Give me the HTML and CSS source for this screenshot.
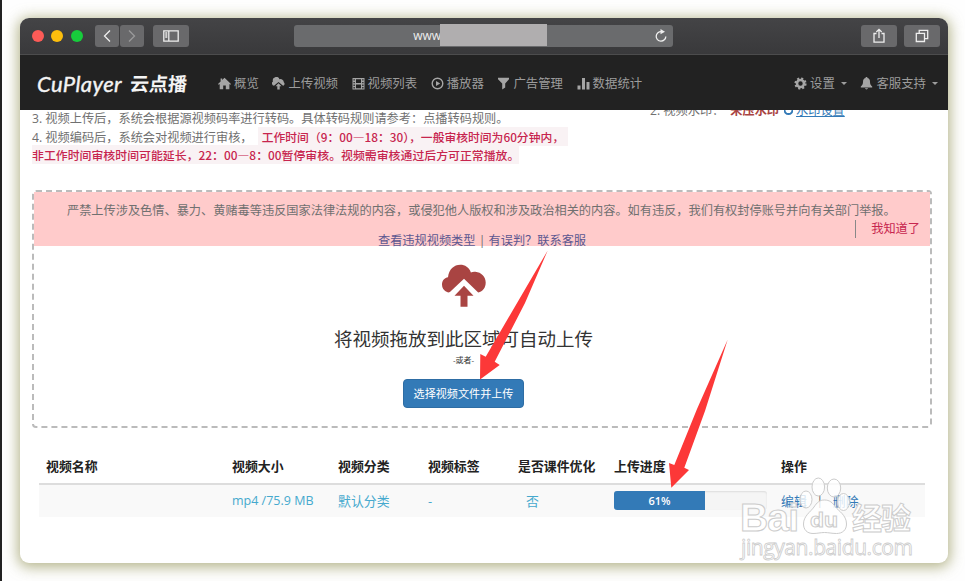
FILE: index.html
```
<!DOCTYPE html>
<html lang="zh-CN">
<head>
  <meta charset="UTF-8">
  <title>CuPlayer 云点播</title>
  <link rel="stylesheet" href="styles.css">
</head>
<body>

  <div class="window">
    <div class="titlebar">
      <span class="dot red"></span>
      <span class="dot yellow"></span>
      <span class="dot green"></span>
      <div class="tool back">
        <svg width="12" height="14" viewBox="0 0 12 14"><path d="M9 1.5 3.5 7 9 12.5"/></svg>
      </div>
      <div class="tool forward">
        <svg width="12" height="14" viewBox="0 0 12 14"><path d="M3 1.5 8.5 7 3 12.5"/></svg>
      </div>
      <div class="tool sidebar">
        <svg width="16" height="12" viewBox="0 0 16 12"><path d="M.8.8h14.4v10.4H.8zM5.8.8v10.4M2.3 3h2M2.3 5h2M2.3 7h2"/></svg>
      </div>
      <div class="address">
        <span class="www">www</span>
        <span class="mask"></span>
        <svg class="reload" width="14" height="14" viewBox="0 0 14 14"><path d="M7.5 2.6A4.8 4.8 0 1 0 11.8 7.4"/><path class="solid" d="M6.5 0 11 2.7 6.5 5.3z"/></svg>
      </div>
      <div class="tool share">
        <svg width="14" height="16" viewBox="0 0 14 16"><path d="M4.5 5.5H2v8.7h10V5.5H9.5M7 10V1.5M4.3 4 7 1.3 9.7 4"/></svg>
      </div>
      <div class="tool tabs">
        <svg width="14" height="14" viewBox="0 0 14 14"><path d="M1.3 4.3h8.2v8.2H1.3zM4.2 4.3V1.3h8.5v8.4H9.5"/></svg>
      </div>
    </div>

    <div class="navbar">
      <div class="logo"><span class="logo-en">CuPlayer</span><span class="logo-cn">云点播</span></div>
      <div class="menu">
        <div class="menu-item">
          <svg width="13" height="13" viewBox="0 0 13 13"><path d="M6.5.8 13 7l-.7.8-.9-.7V12.3H7.8V8.5H5.2v3.8H1.7V7.1l-1 .7L0 7l2.600-2.500V1.500h1.600V3z"/></svg>
          <span>概览</span>
        </div>
        <div class="menu-item">
          <svg width="13" height="13" viewBox="0 0 13 13"><path d="M2 8.700A2.300 2.300 0 0 1 1 4.500 3.400 3.400 0 0 1 7.500 2.300a3.200 3.200 0 0 1 4.300 2.900 2 2 0 0 1-.7 3.500L6.500 4.900z"/><path d="M6.500 6.300 9.500 9.300H7.700V12.500H5.300V9.300H3.500z"/></svg>
          <span>上传视频</span>
        </div>
        <div class="menu-item">
          <svg width="13" height="13" viewBox="0 0 13 13"><path fill-rule="evenodd" d="M.5 1h12v11.500H.5zM1.500 2.200v1.300h1.300V2.200zM1.500 5v1.300h1.300V5zM1.500 7.600v1.300h1.300V7.600zM1.500 10.100v1.300h1.300v-1.300zM10.200 2.200v1.300h1.300V2.200zM10.200 5v1.300h1.300V5zM10.200 7.600v1.300h1.300V7.600zM10.200 10.100v1.300h1.300v-1.300zM4 2.200v3.800h5V2.200zM4 7.400v3.900h5V7.400z"/></svg>
          <span>视频列表</span>
        </div>
        <div class="menu-item">
          <svg width="13" height="13" viewBox="0 0 13 13"><circle class="line" cx="6.5" cy="6.5" r="5.3"/><path d="M5 3.9v5.2l4.2-2.6z"/></svg>
          <span>播放器</span>
        </div>
        <div class="menu-item">
          <svg width="13" height="13" viewBox="0 0 13 13"><path d="M1 .8h11v1.4L8.2 6.500v4L5.200 12.500v-6L1 2.200z"/></svg>
          <span>广告管理</span>
        </div>
        <div class="menu-item">
          <svg width="13" height="13" viewBox="0 0 13 13"><path d="M.5 8.5h3V12.5h-3zM5 1h3v11.5H5zM9.5 5h3v7.5h-3z"/></svg>
          <span>数据统计</span>
        </div>
      </div>
      <div class="menu menu-right">
        <div class="menu-item">
          <svg width="13" height="13" viewBox="0 0 13 13"><circle class="gear-teeth" cx="6.5" cy="6.5" r="4.9"/><circle class="gear" cx="6.5" cy="6.5" r="3.5"/></svg>
          <span>设置</span>
          <i class="caret"></i>
        </div>
        <div class="menu-item">
          <svg width="13" height="13" viewBox="0 0 13 13"><path d="M6.5 0c.8 0 1 .5 1 1.1C9.5 1.7 10 3.2 10 5c0 2 .6 3.2 2.2 4.5v1H.8v-1C2.4 8.2 3 7 3 5c0-1.800.5-3.300 2.500-3.900C5.500.5 5.700 0 6.500 0zM5 11.300h3c-.3 1.500-2.700 1.500-3 0z"/></svg>
          <span>客服支持</span>
          <i class="caret"></i>
        </div>
      </div>
    </div>

    <div class="content">
      <div class="notes">
        <div class="notes-left">
          <p>3. 视频上传后，系统会根据源视频码率进行转码。具体转码规则请参考：点播转码规则。</p>
          <p>4. 视频编码后，系统会对视频进行审核， <code class="code-first">工作时间（9：00—18：30），一般审核时间为60分钟内，</code></p>
          <p><code class="code-second">非工作时间审核时间可能延长，22：00—8：00暂停审核。视频需审核通过后方可正常播放。</code></p>
        </div>
        <div class="notes-right">
          <span>2. 视频水印：</span>
          <b>未压水印</b>
          <a><svg width="9" height="12" viewBox="0 0 9 12"><path d="M2 2a4 4 0 1 0 5 0"/></svg><u>水印设置</u></a>
        </div>
      </div>

      <div class="dropzone">
        <div class="warning">
          <p class="warning-text">严禁上传涉及色情、暴力、黄赌毒等违反国家法律法规的内容，或侵犯他人版权和涉及政治相关的内容。如有违反，我们有权封停账号并向有关部门举报。</p>
          <div class="known"><span>我知道了</span></div>
          <p class="warning-links"><a>查看违规视频类型</a> | <a>有误判？联系客服</a></p>
        </div>
        <div class="drop-body">
          <svg class="cloud" width="46" height="44" viewBox="0 0 46 44">
            <path d="M6.5 28.3A8 8 0 0 1 1 20.8C1 16.3 3.8 13.7 7 13.2 7.8 5.5 13 .8 19.3.8c4.7 0 8.700 2.600 10.600 7.600 1.500-.6 3-.8 4.500-.6 6 .6 10.300 5 10.300 10.700 0 5.200-2.800 9-7.500 9.900L23 14.800 9.200 27.800c-.8.6-1.800.7-2.700.5z"/>
            <path d="M23 21.8 32.5 31.8H26.5v11h-7v-11h-6z"/>
          </svg>
          <h3>将视频拖放到此区域可自动上传</h3>
          <small>-或者-</small>
          <button class="btn">选择视频文件并上传</button>
        </div>
      </div>

      <div class="table">
        <div class="row head">
          <span>视频名称</span>
          <span>视频大小</span>
          <span>视频分类</span>
          <span>视频标签</span>
          <span>是否课件优化</span>
          <span>上传进度</span>
          <span>操作</span>
        </div>
        <div class="row item">
          <span></span>
          <span class="size">mp4 /75.9 MB</span>
          <span>默认分类</span>
          <span>-</span>
          <span class="optimized">否</span>
          <div class="progress"><div class="progress-bar" style="width: 59.5%">61%</div></div>
          <span class="actions"><a>编辑</a><i>|</i><a>删除</a></span>
        </div>
      </div>
    </div>
  </div>

  <!-- 箭头和水印 -->
  <svg class="overlay" width="965" height="581" viewBox="0 0 965 581">
    <path class="arrow" d="M547.7 250.5 485.7 356.7 480.3 354 480 379.5 499.7 365 494.7 361.7 525 303z"/>
    <path class="arrow" d="M727.7 339.5 697 409 674.3 465 669 463 671.3 487.7 689 470 684.3 467.7 705 411z"/>
    <g class="mark">
      <text x="740" y="531" class="mark-bai" textLength="59">Bai</text>
      <ellipse cx="806" cy="499.5" rx="6" ry="8.5"/>
      <ellipse cx="818.3" cy="487" rx="6.3" ry="9"/>
      <ellipse cx="834" cy="488" rx="6.7" ry="9"/>
      <ellipse cx="843.5" cy="502" rx="6" ry="8.5"/>
      <path d="M824.5 500c5 0 8 2.5 11 7 3 4 11 8 11 17 0 6-4 9.5-10 9.5-5 0-8-1-12-1s-7 1-11.5 1c-6 0-9.5-4-9.5-9.5 0-8 7-12 10.5-17 3-4.5 5.5-7 10.5-7z"/>
      <text x="810" y="527" class="mark-du" textLength="28" lengthAdjust="spacingAndGlyphs">du</text>
      <text x="852" y="529" class="mark-cn" textLength="59">经验</text>
      <text x="741" y="555" class="mark-url" textLength="172">jingyan.baidu.com</text>
    </g>
  </svg>

</body>
</html>
```
FILE: styles.css
```
* {
  box-sizing: border-box;
}

body {
  margin: 0;
  height: 581px;
  padding: 18px 17px 18px 18px;
  border-left: 2px solid #222;
  background: #fefefe;
  font-family: "Open Sans", "Noto Sans CJK SC", sans-serif;
  font-size: 12.2px;
  color: #707070;
  overflow: hidden;
}

p, h3 {
  margin: 0;
  font-weight: normal;
}

.window {
  height: 545px;
  border-radius: 9px;
  background: #fff;
  box-shadow: 0 2px 14px 2px rgba(140, 140, 75, 0.65);
  overflow: hidden;
}

/* 浏览器标题栏 */
.titlebar {
  display: flex;
  align-items: center;
  height: 37px;
  padding: 0 8px 0 12px;
  background: linear-gradient(#444446, #39393b);
  border-bottom: 1px solid #4c4c4d;
}

.dot {
  width: 12px;
  height: 12px;
  margin-right: 7.4px;
  border-radius: 50%;
}

.red {
  background: #fc5b57;
}

.yellow {
  background: #fdbe0d;
}

.green {
  background: #17cc3c;
}

.tool {
  display: flex;
  align-items: center;
  justify-content: center;
  width: 36px;
  height: 22px;
  border-radius: 3px;
  background: #69696b;
}

.tool svg, .reload {
  fill: none;
  stroke: #eee;
  stroke-width: 1.3;
}

.back {
  width: 24px;
  margin-left: 5px;
}

.forward {
  width: 24px;
  margin-left: 1px;
}

.forward svg {
  stroke: #9a9a9b;
}

.sidebar {
  margin-left: 9px;
}

.address {
  display: flex;
  align-items: center;
  width: 379px;
  height: 22px;
  margin-left: 105px;
  padding-left: 119px;
  border-radius: 3px;
  background: #6a6b6d;
  color: #eee;
}

.www {
  width: 27px;
  font-size: 12px;
  line-height: 20px;
  overflow: hidden;
}

.mask {
  width: 107px;
  height: 22px;
  margin-top: -2px;
  background: #b0aeaf;
}

.reload {
  margin-left: 107px;
}

.reload .solid {
  fill: #eee;
  stroke: none;
}

.share {
  margin-left: auto;
}

.tabs {
  margin-left: 7px;
}

/* 导航 */
.navbar {
  display: flex;
  align-items: center;
  height: 55px;
  padding: 2px 10px 0 17px;
  background: #222;
  color: #9d9d9d;
}

.logo {
  display: flex;
  align-items: center;
  width: 181px;
  color: #f4f4f4;
}

.logo-en {
  width: 93px;
  font: italic 22px Lato, sans-serif;
  letter-spacing: 0.4px;
  -webkit-text-stroke: 0.4px #f4f4f4;
}

.logo-cn {
  font-size: 19px;
  font-weight: bold;
  line-height: 24px;
  transform: skewX(-5deg);
}

.menu {
  display: flex;
  gap: 13.6px;
}

.menu-right {
  margin-left: auto;
}

.menu-item {
  display: flex;
  align-items: center;
  gap: 3px;
  font-size: 12.4px;
  line-height: 18px;
}

.menu-item svg {
  fill: #a5a5a5;
}

.menu-item .line {
  fill: none;
  stroke: #a5a5a5;
  stroke-width: 1.4;
}

.menu-item .gear {
  fill: none;
  stroke: #a5a5a5;
  stroke-width: 2.6;
}

.menu-item .gear-teeth {
  fill: none;
  stroke: #a5a5a5;
  stroke-width: 2.4;
  stroke-dasharray: 2 1.85;
}

.caret {
  margin-left: 3px;
  border: 3.5px solid transparent;
  border-top-color: #9d9d9d;
  border-bottom: 0;
}

/* 内容 */
.content {
  height: 453px;
  padding: 0 16px 0 12px;
  overflow: hidden;
}

.notes {
  display: flex;
  height: 80px;
}

.notes-left {
  width: 618px;
  line-height: 17.6px;
  white-space: nowrap;
}

.notes-right {
  display: flex;
  height: 18px;
  margin-top: -8px;
  line-height: 18px;
}

.notes-right b {
  margin-left: 6px;
  color: #a94442;
}

.notes-right a {
  display: flex;
  margin-left: 5px;
  color: #337ab7;
}

.notes-right a svg {
  margin: 3px 3px 0 0;
  fill: none;
  stroke: #337ab7;
  stroke-width: 2;
}

code {
  padding: 1px 0;
  background: #f9f2f4;
  color: #c7254e;
  font-family: "Noto Sans CJK SC", sans-serif;
  font-weight: 500;
}

.code-first {
  margin-left: 2px;
  padding: 1px 4px;
  font-size: 11.8px;
}

.code-second {
  font-size: 11.9px;
}

.dropzone {
  width: 900px;
  height: 238px;
  border: 2px dashed #bbb;
  border-radius: 4px;
}

.warning {
  height: 54px;
  padding-top: 10px;
  background: #ffcbcb;
}

.warning-text {
  padding-left: 33px;
  line-height: 18px;
  white-space: nowrap;
}

.known {
  display: flex;
  justify-content: flex-end;
  padding-right: 10px;
  line-height: 18px;
  color: #c7254e;
}

.known span {
  padding-left: 15px;
  border-left: 1px solid #888;
}

.warning-links {
  margin-top: -6px;
  line-height: 18px;
  text-align: center;
}

.warning-links a {
  color: #5c5790;
}

.drop-body {
  display: flex;
  flex-direction: column;
  align-items: center;
  padding: 18px 37px 0 0;
}

.cloud {
  fill: #a94442;
}

h3 {
  margin-top: 17px;
  font-size: 18.5px;
  line-height: 28px;
  color: #333;
}

small {
  font-size: 8px;
  line-height: 14px;
  color: #333;
}

.btn {
  width: 121px;
  height: 29px;
  margin-top: 12px;
  padding: 0 0 2px;
  border: 1px solid #2e6da4;
  border-radius: 4px;
  background: #337ab7;
  color: #fff;
  font-family: inherit;
  font-size: 11.1px;
}

/* 上传列表 */
.table {
  width: 886px;
  margin: 21px 0 0 7px;
}

.row {
  display: grid;
  grid-template-columns: 186px 106px 90px 90px 96px 167px 1fr;
  align-items: center;
  padding-left: 7px;
  font-size: 12.9px;
}

.head {
  height: 36px;
  padding-bottom: 2px;
  border-bottom: 2px solid #ddd;
  color: #222;
  font-weight: 600;
}

.item {
  height: 32px;
  padding-bottom: 1px;
  background: #f9f9f9;
  color: #46a9ce;
}

.size {
  font-size: 12.5px;
}

.optimized {
  padding-left: 8px;
}

.progress {
  width: 153px;
  height: 19px;
  border-radius: 3px;
  background: #f5f5f5;
  box-shadow: inset 0 1px 2px rgba(0, 0, 0, 0.1);
  overflow: hidden;
}

.progress-bar {
  height: 19px;
  background: #337ab7;
  color: #fff;
  font-size: 11px;
  font-weight: 600;
  line-height: 19px;
  text-align: center;
}

.actions {
  display: flex;
  color: #337ab7;
}

.actions i {
  width: 26px;
  font-style: normal;
  text-align: center;
  color: #666;
}

/* 浮在页面上方 */
.overlay {
  position: absolute;
  left: 0;
  top: 0;
}

.arrow {
  fill: #fc3838;
}

.mark {
  fill: rgba(255, 255, 255, 0.8);
  stroke: #ccc;
  stroke-width: 1;
}

.mark-bai {
  font: bold 39px "Liberation Sans", sans-serif;
}

.mark-du {
  font: bold 21px "Liberation Sans", sans-serif;
}

.mark-cn {
  font: bold 30px "Noto Sans CJK SC", sans-serif;
}

.mark-url {
  font: 21px "Open Sans", sans-serif;
  stroke-width: 0.8;
}
```
